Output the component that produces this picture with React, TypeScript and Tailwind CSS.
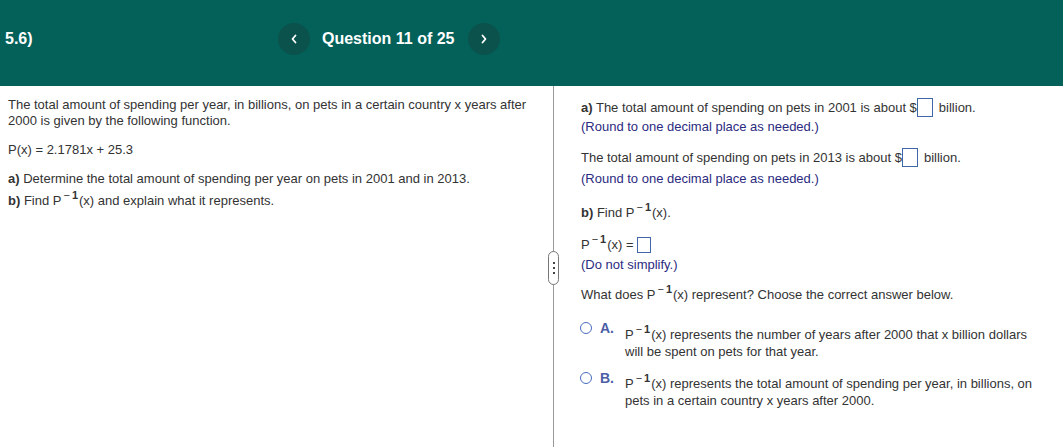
import React from "react";

const Sup = () => (
  <span className="relative -top-[6px] ml-[2px] mr-[1px] text-[11px] leading-none">
    <span className="font-normal">−</span>
    <span className="ml-[2px] font-bold">1</span>
  </span>
);

const Box = ({ w = 16, h = 19 }: { w?: number; h?: number }) => (
  <span
    className="inline-block align-middle border border-[#3f67a8] bg-white"
    style={{ width: w, height: h }}
  />
);

const Chevron = ({ dir }: { dir: "l" | "r" }) => (
  <svg width="8" height="10" viewBox="0 0 8 10" fill="none">
    <path
      d={dir === "l" ? "M5.5 1.5 L2.5 5 L5.5 8.5" : "M2.5 1.5 L5.5 5 L2.5 8.5"}
      stroke="white"
      strokeWidth="1.8"
      strokeLinecap="round"
      strokeLinejoin="round"
    />
  </svg>
);

export default function App() {
  return (
    <div
      className="w-[1063px] h-[447px] overflow-hidden bg-white text-[13px] leading-[16px] text-[#333]"
      style={{ fontFamily: '"Liberation Sans", Arial, sans-serif' }}
    >
      <div className="h-[86px] bg-[#03615a] flex items-start pt-[23px]">
        <div className="w-[278px] pl-[5px] h-[32px] flex items-center text-white font-bold text-[16px]">
          5.6)
        </div>
        <div className="flex items-center h-[32px]">
          <div className="w-[32px] h-[32px] rounded-full bg-[#0b524c] flex items-center justify-center">
            <Chevron dir="l" />
          </div>
          <div className="ml-[12px] mr-[14px] text-white font-bold text-[16px]">Question 11 of 25</div>
          <div className="w-[32px] h-[32px] rounded-full bg-[#0b524c] flex items-center justify-center">
            <Chevron dir="r" />
          </div>
        </div>
      </div>
      <div className="flex h-[361px] relative">
        <div className="w-[554px] border-r border-[#9a9a9a] pl-[8px] pt-[11px] shrink-0">
          <div>The total amount of spending per year, in billions, on pets in a certain country x years after</div>
          <div>2000 is given by the following function.</div>
          <div className="mt-[13px]">P(x) = 2.1781x + 25.3</div>
          <div className="mt-[13px]">
            <span className="font-bold">a)</span> Determine the total amount of spending per year on pets in 2001 and in 2013.
          </div>
          <div className="mt-[6px]">
            <span className="font-bold">b)</span> Find P<Sup />(x) and explain what it represents.
          </div>
        </div>
        <div className="absolute left-[548px] top-[165px] w-[11px] h-[34px] rounded-[6px] border border-[#777] bg-white flex flex-col items-center justify-center gap-[3px]">
          <span className="w-[2px] h-[2px] bg-[#444]" />
          <span className="w-[2px] h-[2px] bg-[#444]" />
          <span className="w-[2px] h-[2px] bg-[#444]" />
        </div>
        <div className="pl-[27px] pt-[12px] flex-1">
          <div className="flex items-center h-[19px]">
            <span>
              <span className="font-bold">a)</span> The total amount of spending on pets in 2001 is about $
            </span>
            <Box />
            <span className="ml-[6px]">billion.</span>
          </div>
          <div className="mt-[2px] text-[#2b2b80]">(Round to one decimal place as needed.)</div>
          <div className="mt-[13px] flex items-center h-[19px]">
            <span>The total amount of spending on pets in 2013 is about $</span>
            <Box />
            <span className="ml-[6px]">billion.</span>
          </div>
          <div className="mt-[4px] text-[#2b2b80]">(Round to one decimal place as needed.)</div>
          <div className="mt-[18px]">
            <span className="font-bold">b)</span> Find P<Sup />(x).
          </div>
          <div className="mt-[16px] flex items-center h-[16px]">
            <span>
              P<Sup />(x) =&nbsp;
            </span>
            <Box w={14} h={16} />
          </div>
          <div className="mt-[4px] text-[#2b2b80]">(Do not simplify.)</div>
          <div className="mt-[14px]">
            What does P<Sup />(x) represent? Choose the correct answer below.
          </div>
          <div className="mt-[23px] flex items-start">
            <div className="flex items-center mt-[-6px] ml-[-1px]">
              <span className="w-[12px] h-[12px] rounded-full border-[1.5px] border-[#4a6cc0] bg-white" />
              <span className="ml-[8px] font-bold text-[#4b5ea6] text-[14px]">A.</span>
            </div>
            <div className="ml-[11px] leading-[17px]">
              <div>
                P<Sup />(x) represents the number of years after 2000 that x billion dollars
              </div>
              <div>will be spent on pets for that year.</div>
            </div>
          </div>
          <div className="mt-[15px] flex items-start">
            <div className="flex items-center mt-[-5px] ml-[-1px]">
              <span className="w-[12px] h-[12px] rounded-full border-[1.5px] border-[#4a6cc0] bg-white" />
              <span className="ml-[8px] font-bold text-[#4b5ea6] text-[14px]">B.</span>
            </div>
            <div className="ml-[11px] leading-[17px]">
              <div>
                P<Sup />(x) represents the total amount of spending per year, in billions, on
              </div>
              <div>pets in a certain country x years after 2000.</div>
            </div>
          </div>
        </div>
      </div>
    </div>
  );
}
